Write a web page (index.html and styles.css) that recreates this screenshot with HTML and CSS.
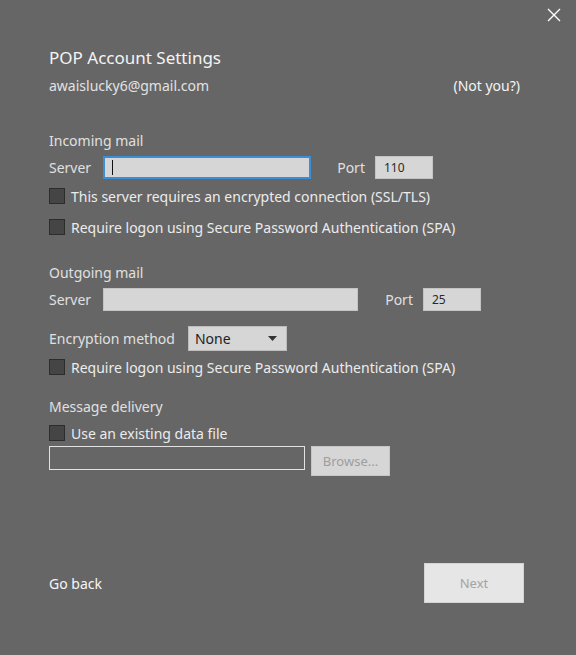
FILE: index.html
```html
<!DOCTYPE html>
<html>
<head>
<meta charset="utf-8">
<link rel="stylesheet" href="styles.css">
</head>
<body>
<div class="dialog">
  <div class="topbar">
    <svg class="close" width="14" height="14" viewBox="0 0 14 14"><path d="M1 1L13 13M13 1L1 13" stroke="#ffffff" stroke-width="1.4" fill="none"/></svg>
  </div>
  <h1 class="title">POP Account Settings</h1>
  <div class="account">
    <span class="email">awaislucky6@gmail.com</span>
    <span class="notyou">(Not you?)</span>
  </div>

  <section class="group incoming">
    <div class="group-label">Incoming mail</div>
    <div class="server-row">
      <span class="lbl">Server</span>
      <div class="input focused server-in"><span class="caret"></span></div>
      <span class="lbl port-lbl">Port</span>
      <div class="input port-in"><span class="val">110</span></div>
    </div>
    <label class="check first"><span class="box"></span><span>This server requires an encrypted connection (SSL/TLS)</span></label>
    <label class="check"><span class="box"></span><span>Require logon using Secure Password Authentication (SPA)</span></label>
  </section>

  <section class="group outgoing">
    <div class="group-label">Outgoing mail</div>
    <div class="server-row">
      <span class="lbl">Server</span>
      <div class="input server-out"></div>
      <span class="lbl port-lbl2">Port</span>
      <div class="input port-in"><span class="val">25</span></div>
    </div>
    <div class="enc-row">
      <span class="lbl">Encryption method</span>
      <div class="select"><span>None</span><svg width="9" height="5" viewBox="0 0 9 5"><path d="M0 0H9L4.5 5Z" fill="#333"/></svg></div>
    </div>
    <label class="check after-enc"><span class="box"></span><span>Require logon using Secure Password Authentication (SPA)</span></label>
  </section>

  <section class="group delivery">
    <div class="group-label">Message delivery</div>
    <label class="check tight"><span class="box"></span><span>Use an existing data file</span></label>
    <div class="file-row">
      <div class="file-in"></div>
      <div class="browse">Browse...</div>
    </div>
  </section>

  <div class="footer">
    <span class="goback">Go back</span>
    <div class="next">Next</div>
  </div>
</div>
</body>
</html>
```
FILE: styles.css
```css
html, body {
  margin: 0;
  padding: 0;
  background: #666666;
}
body {
  font-family: "Noto Sans", "Open Sans", sans-serif;
  color: #e6e6e6;
  width: 576px;
  height: 655px;
  overflow: hidden;
}
.dialog {
  padding: 0 56px 0 49px;
  display: flex;
  flex-direction: column;
}
.topbar {
  height: 46px;
  display: flex;
  justify-content: flex-end;
  margin-right: -41px;
}
.close {
  margin-top: 8px;
}
.title {
  margin: 0;
  font-weight: normal;
  font-size: 17px;
  line-height: 24px;
  color: #f4f4f4;
}
.account {
  display: flex;
  justify-content: space-between;
  font-size: 14px;
  line-height: 20px;
  margin-top: 6px;
}
.email { color: #e2e2e2; }
.notyou { color: #f4f4f4; }

.group { display: flex; flex-direction: column; }
.group-label {
  font-size: 14px;
  line-height: 20px;
  color: #e0e0e0;
}
.incoming { margin-top: 35px; }
.outgoing { margin-top: 26px; }
.delivery { margin-top: 20px; }

.server-row {
  display: flex;
  align-items: center;
  margin-top: 5px;
  height: 23px;
}
.lbl {
  font-size: 14px;
  color: #e0e0e0;
}
.input {
  box-sizing: border-box;
  height: 23px;
  background: #d6d6d6;
  border: 1px solid #c4c4c4;
  display: flex;
  align-items: center;
}
.server-in {
  margin-left: 12px;
  width: 208px;
  border: 1px solid #3e8ed6;
  box-shadow: inset 0 0 0 1px #3e8ed6;
}
.caret {
  display: block;
  width: 1px;
  height: 15px;
  background: #111;
  margin-left: 8px;
}
.port-lbl { margin-left: 26px; }
.port-in {
  margin-left: 10px;
  width: 58px;
}
.val {
  font-size: 12px;
  color: #2a2a2a;
  margin-left: 8px;
}
.server-out {
  margin-left: 12px;
  width: 255px;
}
.port-lbl2 { margin-left: 27px; }

.check {
  display: flex;
  align-items: center;
  font-size: 14px;
  color: #ececec;
  height: 20px;
  margin-top: 11px;
}
.check.first { margin-top: 7px; }
.check.tight { margin-top: 6px; }
.check.after-enc { margin-top: 6px; }
.box {
  box-sizing: border-box;
  width: 16px;
  height: 16px;
  background: #454545;
  border: 1px solid #2c2c2c;
  margin-right: 6px;
  flex: none;
}
.enc-row {
  display: flex;
  align-items: center;
  margin-top: 15px;
  height: 25px;
}
.select {
  box-sizing: border-box;
  margin-left: 13px;
  width: 99px;
  height: 25px;
  background: #d6d6d6;
  border: 1px solid #bdbdbd;
  display: flex;
  align-items: center;
  justify-content: space-between;
  padding: 0 9px 0 6px;
  font-size: 14px;
  color: #222;
}

.file-row {
  display: flex;
  margin-top: 3px;
}
.file-in {
  box-sizing: border-box;
  width: 256px;
  height: 24px;
  border: 1px solid #e2e2e2;
}
.browse {
  box-sizing: border-box;
  margin-left: 6px;
  width: 79px;
  height: 30px;
  background: #d6d6d6;
  border: 1px solid #c6c6c6;
  display: flex;
  align-items: center;
  justify-content: center;
  font-size: 13px;
  color: #9e9e9e;
}
.footer {
  display: flex;
  justify-content: space-between;
  align-items: center;
  margin-top: 87px;
}
.goback {
  font-size: 14px;
  color: #f6f6f6;
}
.next {
  box-sizing: border-box;
  width: 100px;
  height: 40px;
  background: #e6e6e6;
  border: 1px solid #d4d4d4;
  display: flex;
  align-items: center;
  justify-content: center;
  font-size: 13px;
  color: #a4a4a4;
  margin-right: -4px;
}
```
